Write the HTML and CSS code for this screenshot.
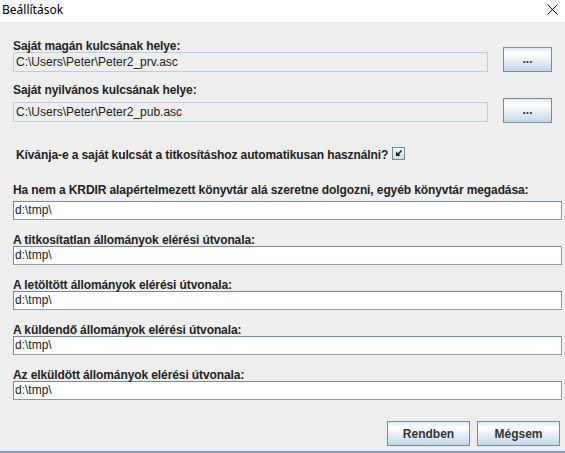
FILE: index.html
```html
<!DOCTYPE html>
<html lang="hu">
<head>
<meta charset="utf-8">
<title>Beállítások</title>
<link rel="stylesheet" href="styles.css">
</head>
<body>
<div class="window">
  <div class="titlebar">
    <span class="title">Beállítások</span>
    <svg class="close" width="11" height="11" viewBox="0 0 11 11"><path d="M0.5 0.5 L10.5 10.5 M10.5 0.5 L0.5 10.5" stroke="#000" stroke-width="1" fill="none"/></svg>
  </div>
  <div class="content">
    <div class="key-row first">
      <div class="key-col">
        <div class="label">Saját magán kulcsának helye:</div>
        <div class="field readonly">C:\Users\Peter\Peter2_prv.asc</div>
      </div>
      <button class="btn browse b1">...</button>
    </div>
    <div class="key-row second">
      <div class="key-col">
        <div class="label">Saját nyilvános kulcsának helye:</div>
        <div class="field readonly">C:\Users\Peter\Peter2_pub.asc</div>
      </div>
      <button class="btn browse b2">...</button>
    </div>
    <div class="check-row">
      <span class="label">Kívánja-e a saját kulcsát a titkosításhoz automatikusan használni?</span>
      <span class="checkbox"><svg width="11" height="11" viewBox="0 0 11 11"><path d="M3 3.5 L3 8 L7.5 8 Z" fill="#222"/><path d="M4 7.5 L8.5 2.5" stroke="#222" stroke-width="1.6" fill="none"/></svg></span>
    </div>
    <div class="dir first-dir">
      <div class="label">Ha nem a KRDIR alapértelmezett könyvtár alá szeretne dolgozni, egyéb könyvtár megadása:</div>
      <div class="field edit">d:\tmp\</div>
    </div>
    <div class="dir">
      <div class="label">A titkosítatlan állományok elérési útvonala:</div>
      <div class="field edit">d:\tmp\</div>
    </div>
    <div class="dir">
      <div class="label">A letöltött állományok elérési útvonala:</div>
      <div class="field edit">d:\tmp\</div>
    </div>
    <div class="dir">
      <div class="label">A küldendő állományok elérési útvonala:</div>
      <div class="field edit">d:\tmp\</div>
    </div>
    <div class="dir">
      <div class="label">Az elküldött állományok elérési útvonala:</div>
      <div class="field edit">d:\tmp\</div>
    </div>
    <div class="footer">
      <button class="btn action">Rendben</button>
      <button class="btn action">Mégsem</button>
    </div>
  </div>
</div>
</body>
</html>
```
FILE: styles.css
```css
* { box-sizing: border-box; }
html, body { margin: 0; padding: 0; }
body {
  width: 565px;
  height: 453px;
  overflow: hidden;
  font-family: "Liberation Sans", Arial, sans-serif;
  font-size: 12px;
  color: #222;
}
.window {
  width: 565px;
  height: 453px;
  background: #eeeeee;
  border-bottom: 2px solid #6aa9c6;
  display: flex;
  flex-direction: column;
}
.titlebar {
  height: 22px;
  background: #ffffff;
  display: flex;
  align-items: flex-start;
  justify-content: space-between;
  padding: 0 7px 0 2px;
}
.title {
  font-family: "Noto Sans", "Open Sans", sans-serif;
  font-size: 12px;
  line-height: 16px;
  margin-top: 2px;
  color: #000;
}
.close { margin-top: 4px; }
.content {
  flex: 1;
  padding: 18px 3px 0 13px;
}
.label {
  font-weight: bold;
  line-height: 12px;
  letter-spacing: -0.1px;
  white-space: nowrap;
  color: #222;
}
.field {
  line-height: 17px;
  white-space: nowrap;
  color: #222;
}
.field.readonly {
  height: 20px;
  width: 475px;
  border: 1px solid #b8cfe5;
  background: #eeeeee;
  padding-left: 2px;
  line-height: 18px;
}
.field.edit {
  height: 19px;
  border: 1px solid #7a8a99;
  border-right-color: #8e9ba7;
  border-bottom-color: #8e9ba7;
  background: #ffffff;
  padding-left: 1px;
}
.key-row {
  display: flex;
  align-items: flex-start;
  gap: 15px;
}
.key-row.second { margin-top: 12px; }
.key-row.second .label { margin-bottom: 6px; }
.btn {
  font-family: "Liberation Sans", Arial, sans-serif;
  font-weight: bold;
  font-size: 12px;
  color: #333;
  border: 1px solid #7a8a99;
  background: linear-gradient(#dfe8f2 0%, #ffffff 22%, #f2f6fb 42%, #dbe6f2 70%, #c4d6ea 100%);
  padding: 0;
  margin: 0;
}
.browse {
  width: 49px;
  height: 25px;
  line-height: 23px;
}
.b1 { margin-top: 7px; }
.b2 { margin-top: 14px; }
.check-row {
  display: flex;
  align-items: flex-start;
  margin-top: 26px;
  padding-left: 3px;
}
.check-row .label { line-height: 12px; }
.checkbox {
  width: 13px;
  height: 13px;
  margin-left: 4px;
  margin-top: -2px;
  border: 1px solid #7a8a99;
  background: linear-gradient(#f4f8fc, #d0deec);
  display: flex;
  align-items: center;
  justify-content: center;
}
.checkbox svg { display: block; }
.dir { margin-top: 14px; }
.dir.first-dir { margin-top: 23px; }
.dir.first-dir .label { margin-bottom: 5px; }
.footer {
  display: flex;
  justify-content: flex-end;
  gap: 7px;
  margin-top: 21px;
  padding-right: 2px;
}
.action {
  width: 83px;
  height: 25px;
}
```
